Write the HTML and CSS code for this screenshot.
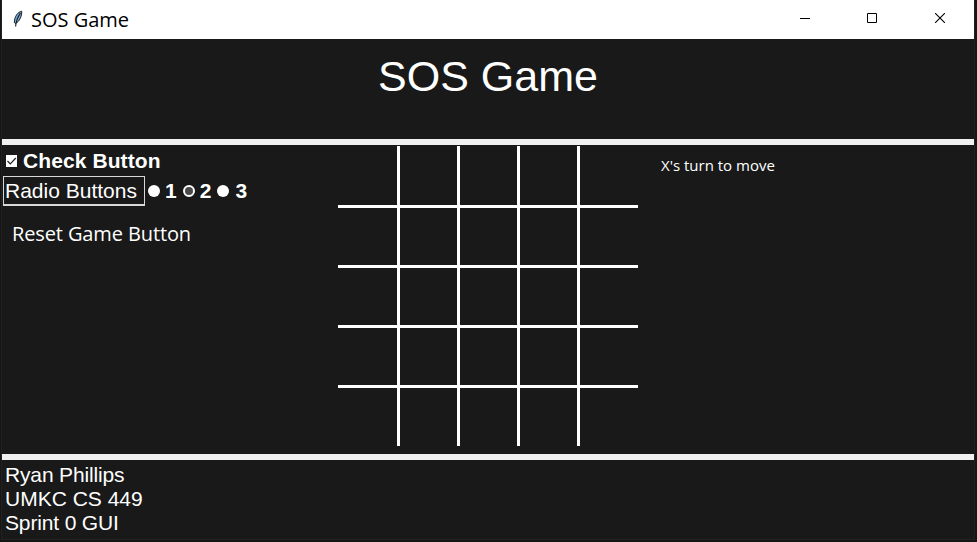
FILE: index.html
```html
<!DOCTYPE html>
<html lang="en">
<head>
<meta charset="utf-8">
<title>SOS Game</title>
<link rel="stylesheet" href="styles.css">
</head>
<body>
<div class="window">
  <header class="titlebar">
    <svg class="feather" width="12" height="18" viewBox="0 0 12 18">
      <path d="M9.700 1.200C6 2 2.500 6 2.300 12.500L3.500 13.500C7.500 11.500 10 6 9.700 1.200Z" fill="#7ba6cc" stroke="#14202e" stroke-width="1"/>
      <path d="M8.500 3C6 6.500 4 10 3.600 16.500" fill="none" stroke="#101820" stroke-width="1.100"/>
    </svg>
    <span class="caption">SOS Game</span>
    <div class="controls">
      <svg width="10" height="10" viewBox="0 0 10 10"><path d="M0 5.500H10" stroke="#000" fill="none"/></svg>
      <svg width="10" height="10" viewBox="0 0 10 10"><path d="M.5 .5H9.500V9.500H.5Z" stroke="#000" fill="none"/></svg>
      <svg class="close" width="10" height="10" viewBox="0 0 10 10"><path d="M0 0L10 10M10 0L0 10" stroke="#000" stroke-width="1.100" fill="none"/></svg>
    </div>
  </header>
  <section class="banner"><h1>SOS Game</h1></section>
  <main class="content">
    <div class="options">
      <div class="check-row">
        <svg class="check" width="12" height="12" viewBox="0 0 12 12"><path d="M0 0H11V12H0Z" fill="#fff"/><path d="M1.500 6L4.300 8.800L9.800 3" fill="none" stroke="#222" stroke-width="1.200"/></svg>
        <span class="bold check-text">Check Button</span>
      </div>
      <div class="radio-row">
        <span class="radio-label">Radio Buttons</span>
        <i class="dot"></i><b class="bold">1</b>
        <i class="dot selected"></i><b class="bold">2</b>
        <i class="dot last"></i><b class="bold">3</b>
      </div>
      <div class="reset">Reset Game Button</div>
    </div>
    <svg class="board" width="300" height="300" viewBox="0 0 300 300">
      <path d="M60.500 0V300M120.500 0V300M180.500 0V300M240.500 0V300M0 60.500H300M0 120.500H300M0 180.500H300M0 240.500H300" stroke="#fff" stroke-width="3" fill="none"/>
    </svg>
    <div class="status">X's turn to move</div>
  </main>
  <footer class="credits">
    <div class="name">Ryan Phillips</div>
    <div>UMKC CS 449</div>
    <div class="name">Sprint 0 GUI</div>
  </footer>
</div>
</body>
</html>
```
FILE: styles.css
```css
* { box-sizing: border-box; }
body {
  margin: 0;
  height: 542px;
  overflow: hidden;
  padding: 0 3px 0 2px;
  background: #151515;
  color: #fff;
  font-family: "Liberation Sans", Arial, sans-serif;
}
.window {
  height: 539px;
  display: flex;
  flex-direction: column;
  background: #191919;
  box-shadow: 0 0 0 1px #222;
}
.titlebar {
  height: 39px;
  display: flex;
  align-items: center;
  background: #fff;
  color: #000;
}
.feather { margin: 0 7px 2px 10px; }
.caption {
  font: 20px/28px "Open Sans", sans-serif;
  white-space: nowrap;
}
.controls {
  margin: 0 29px 3px auto;
  display: flex;
  gap: 57px;
}
.close { margin-left: 1px; }
.banner {
  height: 100px;
  padding-top: 13px;
  text-align: center;
}
h1 {
  margin: 0;
  font-size: 43px;
  line-height: 49px;
  font-weight: 400;
}
.content {
  height: 321px;
  display: flex;
  border: solid #f0f0f0;
  border-width: 6px 0;
}
.options { width: 336px; }
.check-row {
  height: 31px;
  display: flex;
  align-items: center;
  padding-left: 4px;
}
.bold {
  font-size: 21px;
  line-height: 24px;
  font-weight: 700;
}
.check-text {
  margin-left: 5px;
  letter-spacing: 0.09px;
}
.radio-row {
  display: flex;
  align-items: center;
  height: 30px;
  padding-left: 1px;
}
.radio-label {
  width: 142px;
  height: 30px;
  padding-left: 1px;
  border: 1px solid #d8d8d8;
  border-bottom-width: 2px;
  font-size: 21px;
  line-height: 27px;
}
.dot {
  width: 12px;
  height: 12px;
  margin: 0 5px 1px 3px;
  border-radius: 50%;
  background: #fff;
}
.dot.selected {
  margin-left: 6px;
  background: #4a4a4a;
  border: 2.5px solid #fff;
}
.dot.last { margin: 0 6px 1px 6px; }
.reset {
  margin: 14px 0 0 10px;
  font: 20px/28px "Open Sans", sans-serif;
  letter-spacing: -0.12px;
}
.board { margin-top: 1px; }
.status {
  margin: 10px 0 0 23px;
  font: 15px/21px "Open Sans", sans-serif;
}
.credits {
  padding: 3px 0 0 3px;
  font-size: 21px;
  line-height: 24px;
}
.name { letter-spacing: -0.15px; }
```
